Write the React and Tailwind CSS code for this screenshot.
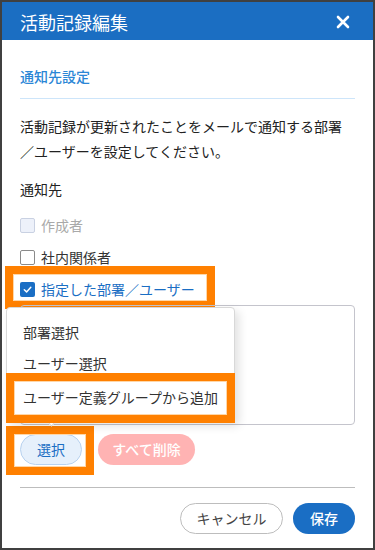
import React from 'react';

const Frame = ({ className }) => (
  <div
    className={`pointer-events-none absolute border-[8px] border-[#ff8000] shadow-[inset_0_0_0_1px_#ffd7a8] ${className}`}
  />
);

const Checkbox = ({ state }) => {
  if (state === 'checked') {
    return (
      <span className="flex h-[15px] w-[15px] items-center justify-center rounded-[2px] bg-[#1a6ec4]">
        <svg width="11" height="11" viewBox="0 0 12 12" fill="none">
          <path d="M2.5 6.2 L5 8.6 L9.6 3.6" stroke="#fff" strokeWidth="1.6" strokeLinecap="round" strokeLinejoin="round" />
        </svg>
      </span>
    );
  }
  if (state === 'disabled') {
    return <span className="h-[15px] w-[15px] rounded-[2px] border border-[#c9d1e2] bg-[#edf1fa]" />;
  }
  return <span className="h-[15px] w-[15px] rounded-[2px] border border-[#8a8a8a] bg-white" />;
};

const App = () => {
  return (
    <div
      className="flex h-[550px] w-[375px] flex-col border-2 border-[#404040] bg-white text-[#222]"
      style={{ fontFamily: '"Noto Sans CJK JP", "Noto Sans", sans-serif' }}
    >
      {/* header */}
      <div className="flex h-[38px] shrink-0 items-center justify-between bg-[#1b6ec2] pl-[18px] pr-[23px]">
        <span className="pt-[2px] text-[18px] text-white">活動記録編集</span>
        <svg width="14" height="14" viewBox="0 0 14 14" className="mt-[2px]">
          <path d="M2 2 L12 12 M12 2 L2 12" stroke="#fff" strokeWidth="2.6" strokeLinecap="round" />
        </svg>
      </div>

      <div className="flex flex-col px-[18px]">
        <div className="mt-[26px] text-[14px] font-medium leading-[20px] text-[#2a86d6]">通知先設定</div>
        <div className="mt-[12px] h-px bg-[#cde5fa]" />

        <p className="mt-[15px] text-[14px] leading-[25px]">
          活動記録が更新されたことをメールで通知する部署
          <br />
          ／ユーザーを設定してください。
        </p>

        <div className="mt-[15px] text-[14px] leading-[20px]">通知先</div>

        <div className="mt-[10px] flex h-[32px] items-center gap-[6px]">
          <Checkbox state="disabled" />
          <span className="text-[14px] text-[#a9a9a9]">作成者</span>
        </div>
        <div className="flex h-[32px] items-center gap-[6px]">
          <Checkbox />
          <span className="text-[14px] text-[#333]">社内関係者</span>
        </div>
        <div className="relative flex h-[32px] items-center gap-[6px]">
          <Checkbox state="checked" />
          <span className="text-[14px] text-[#1a6ec4]">指定した部署／ユーザー</span>
          <Frame className="left-[-15px] top-[-7px] h-[43px] w-[210px]" />
        </div>

        {/* text area with dropdown */}
        <div className="relative h-[120px] rounded-[4px] border border-[#c4c4cc]">
          <div className="absolute left-[-15px] top-[1px] z-10 flex h-[115px] w-[229px] flex-col rounded-[4px] border border-[#d8d8d8] bg-white shadow-[4px_4px_10px_rgba(0,0,0,0.12)]">
            <div className="flex h-[33px] items-center pl-[16px] pt-[16px] text-[14px] text-[#333]">部署選択</div>
            <div className="flex h-[32px] items-center pl-[16px] pt-[12px] text-[14px] text-[#333]">ユーザー選択</div>
            <div className="relative flex flex-1 items-center pl-[16px] text-[14px] text-[#333]">
              ユーザー定義グループから追加
            </div>
            <div className="absolute bottom-[-4px] left-[41px] h-[7px] w-[7px] rotate-45 border-b border-r border-[#d8d8d8] bg-white" />
          </div>
          <Frame className="left-[-15px] top-[67px] z-20 h-[50px] w-[229px]" />
        </div>

        <div className="relative mt-[9px] flex items-center gap-[16px]">
          <button className="h-[31px] w-[62px] rounded-full border border-[#b8d2ef] bg-[#e6f0fb] text-[14px] text-[#1a6ec4]">
            選択
          </button>
          <button className="h-[31px] w-[97px] rounded-full bg-[#ffb3b3] text-[14px] font-medium text-white">
            すべて削除
          </button>
          <Frame className="left-[-14px] top-[-8px] h-[49px] w-[88px]" />
        </div>

        <div className="mt-[22px] h-px bg-[#bdbdbd]" />

        <div className="mt-[15px] flex justify-end gap-[10px]">
          <button className="h-[31px] w-[103px] rounded-full border border-[#bdbdbd] bg-white text-[14px] text-[#444]">
            キャンセル
          </button>
          <button className="h-[31px] w-[62px] rounded-full bg-[#1a6ec4] text-[14px] font-medium text-white">
            保存
          </button>
        </div>
      </div>
    </div>
  );
};

export default App;
